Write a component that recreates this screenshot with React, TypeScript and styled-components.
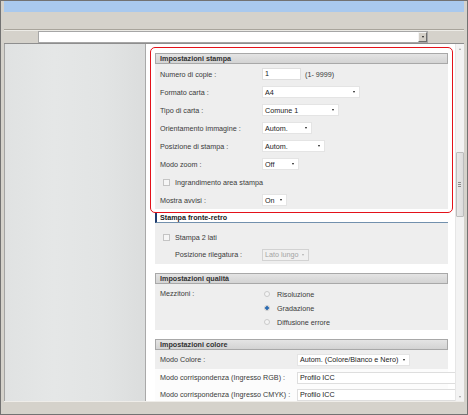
import React from 'react';
import styled, {createGlobalStyle, css} from 'styled-components';

const GlobalStyle = createGlobalStyle`
  html, body {
    margin: 0;
    padding: 0;
    background: #ffffff;
  }
  * {
    box-sizing: border-box;
  }
`;

interface SelectProps {
  value: string;
  width: number;
  disabled?: boolean;
}

const Select: React.FC<SelectProps> = ({value, width, disabled}) => (
  <SelectBox $w={width} $disabled={disabled}>
    <span>{value}</span>
    <Caret $disabled={disabled} />
  </SelectBox>
);

const App: React.FC = () => {
  return (
    <>
      <GlobalStyle />
      <Window>
        <TitleBar />
        <Toolbar />
        <AddressRow>
          <AddressSelect>
            <AddressButton>
              <Caret />
            </AddressButton>
          </AddressSelect>
        </AddressRow>
        <Content>
          <Sidebar />
          <Main>
            <Scroller>
              <HighlightBox>
                <SectionHeader>Impostazioni stampa</SectionHeader>
                <SectionBody $pt={1}>
                  <Row>
                    <Label>Numero di copie :</Label>
                    <TextInput $w={39}>1</TextInput>
                    <Hint>(1- 9999)</Hint>
                  </Row>
                  <Row>
                    <Label>Formato carta :</Label>
                    <Select value="A4" width={98} />
                  </Row>
                  <Row>
                    <Label>Tipo di carta :</Label>
                    <Select value="Comune 1" width={77} />
                  </Row>
                  <Row>
                    <Label>Orientamento immagine :</Label>
                    <Select value="Autom." width={50} />
                  </Row>
                  <Row>
                    <Label>Posizione di stampa :</Label>
                    <Select value="Autom." width={63} />
                  </Row>
                  <Row>
                    <Label>Modo zoom :</Label>
                    <Select value="Off" width={37} />
                  </Row>
                  <Row>
                    <Checkbox />
                    <span>Ingrandimento area stampa</span>
                  </Row>
                  <Row>
                    <Label>Mostra avvisi :</Label>
                    <Select value="On" width={25} />
                  </Row>
                </SectionBody>
              </HighlightBox>

              <Section>
                <ActiveHeader>Stampa fronte-retro</ActiveHeader>
                <SectionBody $pt={6} $pb={1}>
                  <Row $h={17}>
                    <Checkbox />
                    <span>Stampa 2 lati</span>
                  </Row>
                  <Row $h={17}>
                    <Label $indent>Posizione rilegatura :</Label>
                    <Select value="Lato lungo" width={47} disabled />
                  </Row>
                </SectionBody>
              </Section>

              <Section>
                <SectionHeader>Impostazioni qualità</SectionHeader>
                <SectionBody $pt={3} $pb={1}>
                  <Row $h="auto" $top>
                    <Label $lh={14}>Mezzitoni :</Label>
                    <RadioList>
                      <RadioRow>
                        <Radio />
                        <span>Risoluzione</span>
                      </RadioRow>
                      <RadioRow>
                        <Radio $checked />
                        <span>Gradazione</span>
                      </RadioRow>
                      <RadioRow>
                        <Radio />
                        <span>Diffusione errore</span>
                      </RadioRow>
                    </RadioList>
                  </Row>
                </SectionBody>
              </Section>

              <Section>
                <SectionHeader>Impostazioni colore</SectionHeader>
                <SectionBody $pt={0}>
                  <Row $h={19}>
                    <Label $w={137}>Modo Colore :</Label>
                    <Select value="Autom. (Colore/Bianco e Nero)" width={113} />
                  </Row>
                  <Row $h={17} $plain>
                    <Label $w={137}>Modo corrispondenza (Ingresso RGB) :</Label>
                    <TextInput $w={170}>Profilo ICC</TextInput>
                  </Row>
                  <Row $h={17} $plain>
                    <Label $w={137}>Modo corrispondenza (Ingresso CMYK) :</Label>
                    <TextInput $w={170}>Profilo ICC</TextInput>
                  </Row>
                </SectionBody>
              </Section>
            </Scroller>
            <ScrollBar>
              <ScrollArrow />
              <Thumb>
                <Grip />
                <Grip />
                <Grip />
              </Thumb>
              <ScrollArrow $down />
            </ScrollBar>
          </Main>
        </Content>
        <StatusBar />
      </Window>
    </>
  );
};

export default App;

const Window = styled.div`
  width: 468px;
  height: 415px;
  display: flex;
  flex-direction: column;
  padding: 0 3px;
  border: 1px solid #727272;
  background: #d5d2cb;
  font-family: 'Liberation Sans', Arial, sans-serif;
  font-size: 7.2px;
  color: #3a3a3a;
  overflow: hidden;
`;

const TitleBar = styled.div`
  height: 11px;
  flex: none;
  background: #a9c9ee;
`;

const Toolbar = styled.div`
  height: 18px;
  flex: none;
  border-bottom: 1px solid #a8a49b;
`;

const AddressRow = styled.div`
  height: 13px;
  flex: none;
  padding-left: 34px;
  border-top: 1px solid #ecebe6;
`;

const AddressSelect = styled.div`
  width: 390px;
  height: 12px;
  background: #ffffff;
  border: 1px solid #a6a6a6;
  display: flex;
  justify-content: flex-end;
  align-items: center;
  padding-right: 0;
`;

const AddressButton = styled.div`
  width: 9px;
  height: 10px;
  background: #d4d0c8;
  border: 1px solid;
  border-color: #f4f4f4 #6e6e6e #6e6e6e #f4f4f4;
  display: flex;
  align-items: center;
  justify-content: center;
`;

const Content = styled.div`
  flex: 1;
  min-height: 0;
  display: flex;
  border-top: 1px solid #8e8e8e;
`;

const Sidebar = styled.div`
  width: 142px;
  flex: none;
  border-left: 1px solid #a4a4a4;
  border-right: 1px solid #a9a9a9;
  background: linear-gradient(90deg, #e0e2e2 0%, #e5e7e7 35%, #e2e4e4 70%, #dbdddd 100%);
`;

const Main = styled.div`
  flex: 1;
  display: flex;
  background: #ffffff;
  min-width: 0;
`;

const Scroller = styled.div`
  flex: 1;
  min-width: 0;
  overflow: hidden;
  padding: 3px 2px 0 4px;
`;

const HighlightBox = styled.div`
  border: 1px solid #e3121a;
  border-radius: 5px;
  padding: 5px 4px 3px 4px;
`;

const Section = styled.div`
  margin: 0 5px 9px 5px;
`;

const SectionHeader = styled.div`
  height: 11px;
  border: 1px solid #a8a8a8;
  background: linear-gradient(180deg, #e4e4e4, #d3d3d3);
  padding-left: 4px;
  font-weight: bold;
  line-height: 9px;
  color: #333333;
`;

const ActiveHeader = styled.div`
  height: 10px;
  border-left: 2px solid #1e3c6e;
  border-bottom: 1px solid #7290ad;
  background: #ffffff;
  padding-left: 3px;
  font-weight: bold;
  line-height: 9px;
  color: #222222;
`;

const SectionBody = styled.div<{$pt: number; $pb?: number}>`
  background: #eeeeee;
  padding: ${p => p.$pt}px 0 ${p => p.$pb ?? 0}px 0;
`;

const Row = styled.div<{$h?: number | 'auto'; $top?: boolean; $plain?: boolean}>`
  display: flex;
  align-items: ${p => (p.$top ? 'flex-start' : 'center')};
  height: ${p => (p.$h === 'auto' ? 'auto' : `${p.$h ?? 18}px`)};
  padding-left: 5px;
  white-space: nowrap;
  ${p =>
    p.$plain &&
    css`
      background: #fcfcfc;
    `}
`;

const Label = styled.div<{$w?: number; $indent?: boolean; $lh?: number}>`
  width: ${p => p.$w ?? 102}px;
  flex: none;
  padding-left: ${p => (p.$indent ? 15 : 0)}px;
  line-height: ${p => (p.$lh ? `${p.$lh}px` : 'normal')};
`;

const TextInput = styled.div<{$w: number}>`
  width: ${p => p.$w}px;
  flex: none;
  height: 12px;
  background: #ffffff;
  border: 1px solid #dedede;
  padding-left: 2px;
  line-height: 10px;
  color: #222222;
`;

const Hint = styled.span`
  margin-left: 4px;
`;

const SelectBox = styled.div<{$w: number; $disabled?: boolean}>`
  width: ${p => p.$w}px;
  flex: none;
  height: 12px;
  display: flex;
  align-items: center;
  justify-content: space-between;
  padding: 0 4px 0 2px;
  background: ${p => (p.$disabled ? '#f0f0f0' : '#ffffff')};
  border: 1px solid ${p => (p.$disabled ? '#d2d2d2' : '#e4e4e4')};
  color: ${p => (p.$disabled ? '#a4a4a4' : '#222222')};
`;

const Caret = styled.i<{$disabled?: boolean}>`
  width: 0;
  height: 0;
  border-left: 1.5px solid transparent;
  border-right: 1.5px solid transparent;
  border-top: 2px solid ${p => (p.$disabled ? '#b0b0b0' : '#1a1a1a')};
`;

const Checkbox = styled.div`
  width: 7px;
  height: 7px;
  flex: none;
  margin: 0 5px 0 3px;
  border: 1px solid #c4c4c4;
  background: #f6f6f6;
`;

const RadioList = styled.div`
  display: flex;
  flex-direction: column;
`;

const RadioRow = styled.div`
  height: 14px;
  display: flex;
  align-items: center;
  padding-left: 2px;
`;

const Radio = styled.div<{$checked?: boolean}>`
  width: 6px;
  height: 6px;
  flex: none;
  margin-right: 7px;
  border-radius: 50%;
  border: 1px solid #cacaca;
  background: ${p =>
    p.$checked ? 'radial-gradient(circle, #2b6cb4 0 1.6px, #e8eef5 2px)' : '#f4f4f4'};
`;

const ScrollBar = styled.div`
  width: 9px;
  flex: none;
  display: flex;
  flex-direction: column;
  align-items: center;
  background: #f3f3f3;
  border-left: 1px solid #e6e6e6;
  padding: 4px 0 3px 0;
`;

const ScrollArrow = styled.i<{$down?: boolean}>`
  width: 0;
  height: 0;
  border-left: 1.5px solid transparent;
  border-right: 1.5px solid transparent;
  ${p =>
    p.$down
      ? css`
          border-top: 2px solid #a0a0a0;
          margin-top: auto;
        `
      : css`
          border-bottom: 2px solid #a0a0a0;
        `}
`;

const Thumb = styled.div`
  width: 8px;
  height: 65px;
  margin-top: 102px;
  margin-left: -1px;
  border: 1px solid #bdbdbd;
  border-radius: 1px;
  background: linear-gradient(90deg, #e9e9e9, #dcdcdc);
  display: flex;
  flex-direction: column;
  align-items: center;
  justify-content: center;
  gap: 1px;
`;

const Grip = styled.div`
  width: 3px;
  height: 1px;
  background: #8c8c8c;
`;

const StatusBar = styled.div`
  height: 13px;
  flex: none;
  border-top: 1px solid #efede9;
`;
